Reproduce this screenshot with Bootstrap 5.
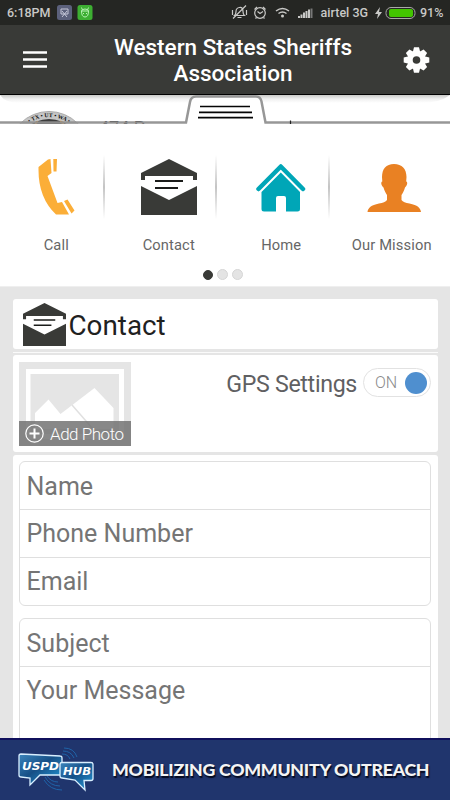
<!DOCTYPE html>
<html lang="en">
<head>
<meta charset="utf-8">
<meta name="viewport" content="width=device-width, initial-scale=1">
<title>Western States Sheriffs Association</title>
<link href="https://cdn.jsdelivr.net/npm/bootstrap@5.3.0/dist/css/bootstrap.min.css" rel="stylesheet">
<style>
body{font-family:Roboto,"Liberation Sans",sans-serif;background:#e5e5e5;height:800px;color:#1f211f}
svg{display:block;flex:none}
.status-bar{height:25px;background:#252623;color:#c9c9c7;font-size:12.5px;font-weight:500;line-height:25px}
.clock{margin-left:7px;width:50px}
.carrier{margin-left:7px}
.charge{margin:0 4px 0 7px}
.percent{width:30px}
.app-bar{height:70px;background:#393a37;border-bottom:1px solid #000;color:#fff}
.app-title{font-size:22.5px;line-height:26px;font-weight:500;padding-left:13px;padding-top:1px;white-space:nowrap}
.slide-menu{height:192px;background:#fff;border-bottom:1px solid #efefef}
.menu-item{height:142px;padding-top:35px}
.menu-item.ruled{background:linear-gradient(#fff,#c4c4c4 50%,#fff) right 8px top 31px/2px 64px no-repeat}
.menu-icon{height:56px}
.menu-label{font-size:14.7px;line-height:20px;margin-top:20px;color:#666;letter-spacing:.13px}
.our-label{margin-right:4px}
.dots{gap:4px;margin-top:3px;padding-right:5px}
.pager-dot{width:11px;height:11px;background:#e4e4e4;border:1px solid #d6d6d6}
.pager-dot.on{background:#393a37;border-color:#393a37;width:10px;height:10px}
.panel{background:#fff;border-radius:3px}
.page-body{padding:12px 12.5px 0}
.head-panel{height:50px;padding:4px 0 0 10px}
.head-title{font-size:27.8px;line-height:46px;margin-left:3px}
.thin-rule{height:1px;background:#fafafa;margin:3px 0 2px}
.photo-panel{height:97px;padding:7px 6.5px}
.photo-text{font-size:17px;font-weight:300}
.gps{font-size:23.2px;line-height:30px;color:#5f6062;margin-top:7px;letter-spacing:-.33px}
.switch-pill{width:68px;height:29px;border:1px solid #e2e2e2;border-radius:15px;margin:6px 0 0 6px;padding:0 3px 0 11px;font-size:16px;font-weight:300;color:#8a8a8a}
.knob{width:22px;height:22px;background:#4f8fcf}
.form-panel{height:283px;margin-top:3px;padding:6px 6.5px 0;border-radius:3px 3px 0 0}
.field-set{border:1px solid #dfdfdf;border-radius:6px}
.field-row{height:47px;line-height:49px;font-size:25px;color:#757575;padding-left:6.5px}
.field-row+.field-row{border-top:1px solid #dfdfdf;height:48px;line-height:48px}
.message-set{margin-top:12px;height:140px}
.sponsor{height:62px;background:#20356d;border-top:2px solid #10105c;color:#f4f4f4}
.sponsor-text{font-family:Lato,sans-serif;font-weight:900;font-size:17.7px;letter-spacing:-.24px;text-shadow:1px 1.5px 1px #050b20;white-space:nowrap;margin-left:17px}
</style>
<script src="https://cdn.jsdelivr.net/npm/bootstrap@5.3.0/dist/js/bootstrap.bundle.min.js"></script>
</head>
<body class="d-flex flex-column overflow-hidden">
<svg width="0" height="0" class="position-absolute"><defs>
<symbol id="mail" viewBox="0 0 56 56"><path fill="#393a37" d="M28 0 56 14v7h-4v-4H4v4H0v-7zM0 27 28 41 56 27v29H0z"/><path stroke="#1b1c1a" stroke-width="2" d="M14 22h28M14 29h23"/></symbol>
</defs></svg>

<div class="status-bar d-flex align-items-center">
  <span class="clock">6:18PM</span>
  <svg width="36" height="15" viewBox="0 0 36 15"><rect x="0" width="15" height="15" rx="2.5" fill="#5c617c"/><path d="M4 4h7v5H4zM5 12l5-6M10 12 5 6" fill="none" stroke="#c6c8d8"/><rect x="20.500" width="15" height="15" rx="2.500" fill="#3daf32"/><path d="M24 6h8M24.500 6q0 6 3.500 6t3.500-6q-1-2-3.500-2t-3.500 2zM25.500 5l-1-2.500M30.500 5l1-2.500M26 8.500h1M29 8.500h1" fill="none" stroke="#b9f2b4"/></svg>
  <svg class="ms-auto" width="83" height="18" viewBox="232 4 83 18" fill="none" stroke="#c9c9c7" stroke-width="1.2"><path d="M235.500 15.500q1.500-1.500 1.500-4 0-3.500 3.500-4t3.500 4q0 2.500 1.500 4zM238.500 17.500h4M247 5.500 234 18.500M233.500 10v5M247.500 10v5"/><circle cx="261" cy="13" r="5.300"/><path d="M258.500 11.500l2.500 2 3-2M255.500 9.500l2.500-2.500M266.500 9.500 264 7M257.500 17.500l-1 1M264.500 17.500l1 1"/><path d="M277 11q6.500-5 13 0M279.500 13.500q4-3 8 0" stroke-width="1.500"/><circle cx="283.500" cy="16" r="1.500" fill="#c9c9c7" stroke="none"/><path stroke-width="2" d="M300 18v-2M302.500 18v-3.500M305 18v-5.500M307.500 18v-7M310 18v-8.500"/><path stroke="#777" stroke-width="2" d="M312.500 18V8.500"/></svg>
  <span class="carrier">airtel 3G</span>
  <svg class="charge" width="41" height="14" viewBox="0 0 41 14"><path fill="#c9c9c7" d="M5 1 0 8h3L2 13l5-7H4z"/><rect x="11" y="1.500" width="29" height="11" rx="5" fill="none" stroke="#a9a9a7"/><rect x="14" y="3" width="24" height="8" rx="2" fill="#43c400"/></svg>
  <span class="percent">91%</span>
</div>

<nav class="app-bar d-flex align-items-center">
  <svg width="50" height="24" viewBox="0 0 50 24"><path d="M23 4.500h24M23 11.500h24M23 18.500h24" stroke="#fff" stroke-width="2.600"/></svg>
  <div class="app-title text-center flex-grow-1">Western States Sheriffs<br>Association</div>
  <svg width="47" height="28" viewBox="0 0 47 28"><g transform="translate(13.500 14)" fill="#fff"><path d="M-2.500-12.800h5l1.500 6h-8zM-2.500 12.800h5l1.500-6h-8z"/><path transform="rotate(45)" d="M-2.500-12.500h5l1.500 6h-8zM-2.500 12.500h5l1.500-6h-8z"/><path transform="rotate(90)" d="M-2.500-12.800h5l1.500 6h-8zM-2.500 12.800h5l1.500-6h-8z"/><path transform="rotate(135)" d="M-2.500-12.500h5l1.500 6h-8zM-2.500 12.500h5l1.500-6h-8z"/><circle r="6.500" fill="none" stroke="#fff" stroke-width="5.400"/></g></svg>
</nav>

<section class="slide-menu">
  <svg width="450" height="29" viewBox="0 95 450 29">
    <defs><linearGradient id="sh" x2="0" y2="1"><stop stop-color="#c9c9c7"/><stop offset=".5" stop-color="#f0f0f0"/><stop offset="1" stop-color="#fff"/></linearGradient><path id="arc" d="M14 152A35 35 0 0 1 84 152"/></defs>
    <path fill="url(#sh)" d="M0 95h450q-10 8-30 8H20Q5 103 0 95z"/>
    <circle cx="49" cy="152" r="40.500" fill="#c5c5c5" stroke="#aaa"/><circle cx="49" cy="152" r="33" fill="#3d3d3d"/><path d="M35 123.500l3-2M60 121.500l4 2" stroke="#d79339" stroke-width="2"/>
    <text font-family="Liberation Serif" font-weight="700" font-size="5.800" fill="#111" text-anchor="middle"><textPath href="#arc" startOffset="50%">• TX • UT • WA •</textPath></text>
    <text x="99" y="134" font-family="Roboto,sans-serif" font-size="18" fill="#222">474 P</text>
    <path d="M0 124V122.500H186L190 102q1-5.500 6-5.500H256q4.500 0 5.500 5L265.500 122.500H450V126H0z" fill="#fff" fill-opacity=".2"/>
    <path d="M186 122.500 190 102q1-5.500 6-5.500H256q4.500 0 5.500 5L265.500 122.500z" fill="#fff"/>
    <path d="M0 122.500H186L190 102q1-5.500 6-5.500H256q4.500 0 5.500 5L265.500 122.500H450" fill="none" stroke="#8f8f8f" stroke-width="2.500" stroke-opacity=".93"/>
    <path d="M290.500 120.500v3.500" stroke="#222" stroke-width="1.200"/>
    <path d="M200 106.500h50M199 112.300h53M198 117.700h55" stroke="#050505" stroke-width="1.700"/>
  </svg>
  <div class="row g-0 text-center">
    <div class="col-3 menu-item ruled"><div class="menu-icon d-flex justify-content-center"><svg width="37" height="56" viewBox="38 159 37 56" fill="#fbae38"><path d="M48 159.500 50.500 159 51.500 173 47.500 176 57.500 203 62 202 69 214.500H56Q38.500 198 38.500 170V167zM53.300 159h3.700l-.5 12.500h-3zM64 201l3.500-1.500 7 11-3 3z"/></svg></div><div class="menu-label">Call</div></div>
    <div class="col-3 menu-item ruled"><div class="menu-icon d-flex justify-content-center"><svg width="56" height="56"><use href="#mail"/></svg></div><div class="menu-label">Contact</div></div>
    <div class="col-3 menu-item ruled"><div class="menu-icon d-flex justify-content-center"><svg width="50" height="56" viewBox="256 159 50 56" fill="#00a6b7"><path d="M258.500 189 280.800 166.500 303 189" fill="none" stroke="#00a6b7" stroke-width="4.500" stroke-linecap="round" stroke-linejoin="round"/><path d="M280.800 172.500 300 192v17q0 2.500-2.500 2.500H286V198q0-2-2-2h-6q-2 0-2 2v13.500H264q-2.500 0-2.500-2.500V192z"/></svg></div><div class="menu-label">Home</div></div>
    <div class="col-3 menu-item"><div class="menu-icon d-flex justify-content-center"><svg width="54" height="56" viewBox="366.500 159 54 56" fill="#e98123"><path d="M393.500 164c8 0 12.500 5 12.500 13l-.3 4.500c2 .5.800 4.500-1.200 6-1 3.500-2.500 6-3.500 7.500v5q2 2.500 8 3.500c8 1.500 11 4.500 11.500 8.500H367c.5-4 3.500-7 11.500-8.500q6-1 8-3.500v-5c-1-1.500-2.500-4-3.500-7.500-2-1.500-3.200-5.500-1.200-6l-.3-4.500c0-8 4-13 12-13z"/></svg></div><div class="menu-label our-label">Our Mission</div></div>
  </div>
  <div class="dots d-flex justify-content-center align-items-center"><span class="pager-dot on rounded-circle"></span><span class="pager-dot rounded-circle"></span><span class="pager-dot rounded-circle"></span></div>
</section>

<main class="page-body">
  <div class="panel head-panel d-flex"><svg width="43" height="43"><use href="#mail"/></svg><div class="head-title">Contact</div></div>
  <div class="thin-rule"></div>
  <div class="panel photo-panel d-flex">
    <svg width="112" height="84" viewBox="0 0 112 84"><path fill="#e5e5e5" d="M0 0h112v84H0z"/><path fill="#fff" d="M7 7h98v70H7z"/><path fill="#e5e5e5" d="M11.500 12h88.500v60H11.500z"/><path fill="#fff" d="M16 51 29.500 37.500 41.500 52 75.500 26 94.500 46v21H16z"/><path stroke="#e0e0e0" stroke-width="1.500" d="M53 43 74 67"/><path fill="#6e6e6e" fill-opacity=".82" d="M0 59h112v25H0z"/><g fill="none" stroke="#fff"><circle cx="15.500" cy="71.500" r="8.700" stroke-width="1.200"/><path stroke-width="2" d="M10.500 71.500h10M15.500 66.500v10"/></g><text class="photo-text" x="31" y="77.500" textLength="74" fill="#fff">Add Photo</text></svg>
    <div class="gps ms-auto">GPS Settings</div>
    <div class="switch-pill d-flex align-items-center justify-content-between"><span>ON</span><span class="knob rounded-circle"></span></div>
  </div>
  <div class="panel form-panel">
    <div class="field-set"><div class="field-row">Name</div><div class="field-row">Phone Number</div><div class="field-row">Email</div></div>
    <div class="field-set message-set"><div class="field-row">Subject</div><div class="field-row">Your Message</div></div>
  </div>
</main>

<footer class="sponsor d-flex align-items-center mt-auto flex-shrink-0 position-relative">
  <svg width="95" height="56" viewBox="0 740 95 56"><defs><linearGradient id="bub" x2="1" y2="1"><stop stop-color="#3c86bd"/><stop offset=".45" stop-color="#164f86"/><stop offset="1" stop-color="#25a0e0"/></linearGradient></defs>
  <g fill="none" stroke="#1f63a8"><path d="M62 752q6 0 8 5M63 749q8 0 11 7M64 746q10 0 13 9M58 780q-7 0-11-6M60 784q-10 0-15-9M62 788q-12 0-18-10"/></g>
  <path d="M21 752 60 754q2 0 2 2v15q0 2-2 2H40L30 783V776L21 775q-2 0-2-2V754q0-2 2-2z" fill="url(#bub)" stroke="#d8efff" stroke-width="1.300"/><path d="M62 760.500H91q2 0 2 2v14q0 2-2 2H84L85 788 75 778 62 776q-2 0-2-2V762.500q0-2 2-2z" fill="url(#bub)" stroke="#d8efff" stroke-width="1.300"/>
  <g fill="#fff" font-family="'DejaVu Sans',sans-serif" font-weight="700" font-style="italic"><text x="22" y="768" font-size="11" textLength="37" lengthAdjust="spacingAndGlyphs">USPD</text><text x="63" y="773" font-size="10" textLength="28" lengthAdjust="spacingAndGlyphs">HUB</text></g></svg>
  <div class="sponsor-text">MOBILIZING COMMUNITY OUTREACH</div>
</footer>
</body>
</html>
